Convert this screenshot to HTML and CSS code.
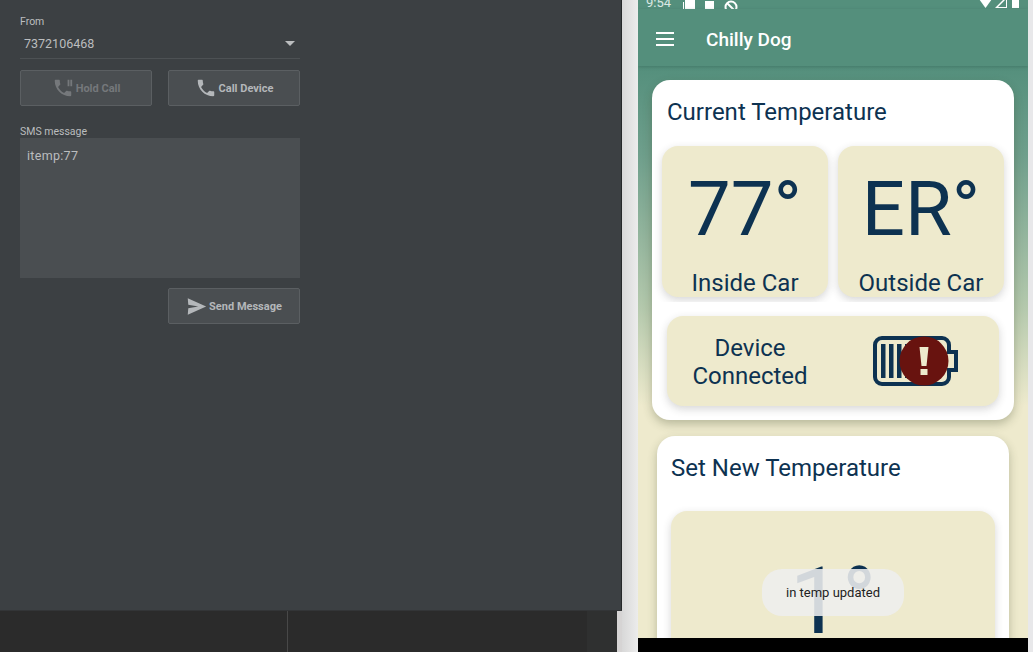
FILE: index.html
```html
<!DOCTYPE html>
<html lang="en">
<head>
  <meta charset="UTF-8">
  <title>Chilly Dog</title>
  <link rel="stylesheet" href="styles.css">
</head>
<body>

  <!-- Emulator extended controls -->
  <div class="tool">
    <section class="panel">
      <label class="field-label from-label">From</label>
      <div class="select-row">
        <span>7372106468</span>
        <span class="caret"></span>
      </div>

      <div class="btn-row">
        <button class="btn disabled">
          <svg viewBox="0 0 24 24" class="btn-icon"><path d="M17 3h2v7h-2zm3 0h2v7h-2zM6.62 10.79c1.44 2.83 3.76 5.14 6.59 6.59l2.2-2.2c.27-.27.67-.36 1.02-.24 1.12.37 2.33.57 3.57.57.55 0 1 .45 1 1V20c0 .55-.45 1-1 1-9.39 0-17-7.61-17-17 0-.55.45-1 1-1h3.5c.55 0 1 .45 1 1 0 1.25.2 2.45.57 3.57.11.35.03.74-.25 1.02l-2.2 2.2z"/></svg>
          Hold Call
        </button>
        <button class="btn">
          <svg viewBox="0 0 24 24" class="btn-icon"><path d="M6.62 10.79c1.44 2.83 3.76 5.14 6.59 6.59l2.2-2.2c.27-.27.67-.36 1.02-.24 1.12.37 2.33.57 3.57.57.55 0 1 .45 1 1V20c0 .55-.45 1-1 1-9.39 0-17-7.61-17-17 0-.55.45-1 1-1h3.5c.55 0 1 .45 1 1 0 1.25.2 2.45.57 3.57.11.35.03.74-.25 1.02l-2.2 2.2z"/></svg>
          Call Device
        </button>
      </div>

      <label class="field-label sms-label">SMS message</label>
      <div class="sms-box">itemp:77</div>

      <div class="send-row">
        <button class="btn">
          <svg viewBox="0 0 24 24" class="btn-icon send-icon"><path d="M2 2.500L23 12 2 21.500l.6-7.500L14 12 2.600 10z"/></svg>
          Send Message
        </button>
      </div>
    </section>
    <div class="tool-bottom">
      <div class="bottom-cell first"></div>
      <div class="bottom-cell middle"></div>
      <div class="bottom-cell last"></div>
      <div class="bottom-edge"></div>
    </div>
  </div>

  <div class="gutter"></div>

  <!-- Phone screen -->
  <div class="phone">
    <div class="status">
      <div class="status-left">
        <span class="clock">9:54</span>
        <svg class="st st-news" viewBox="0 0 12 12"><path d="M2 0h10v9H2zM0 2h1v8h9v1H0z"/></svg>
        <span class="st-sd"></span>
        <svg class="st st-dnd" viewBox="0 0 14 14"><circle cx="7" cy="7" r="5.500" fill="none" stroke="#fff" stroke-width="2"/><path d="M3 3l8 8" stroke="#fff" stroke-width="2"/></svg>
      </div>
      <div class="status-right">
        <svg class="st st-wifi" viewBox="0 0 13 12"><path d="M0 3h13L6.500 12z"/></svg>
        <svg class="st st-signal" viewBox="0 0 12 12"><path d="M12 0v12H0zM11 3L3 11h8z" fill-rule="evenodd"/></svg>
        <span class="st-batt"></span>
      </div>
    </div>

    <header class="appbar">
      <div class="menu"><span></span><span></span><span></span></div>
      <h1>Chilly Dog</h1>
    </header>

    <main class="content">
      <section class="card current">
        <h2>Current Temperature</h2>
        <div class="temps">
          <div class="tile temp">
            <div class="big">77°</div>
            <div class="caption">Inside Car</div>
          </div>
          <div class="tile temp">
            <div class="big">ER°</div>
            <div class="caption">Outside Car</div>
          </div>
        </div>
        <div class="tile device">
          <div class="device-text">Device<br>Connected</div>
          <div class="battery">
            <svg viewBox="0 0 86 50" width="86" height="50">
              <path d="M10 2h60a7 7 0 0 1 7 7v7h7v18h-7v7a7 7 0 0 1-7 7H10a7 7 0 0 1-7-7V9a7 7 0 0 1 7-7z" fill="none" stroke="#0d3251" stroke-width="4"/>
              <path d="M9 8h4.500v34H9zM17 8h4.500v34H17zM25 8h4.500v34H25zM33 8h4.500v34H33zM41 8h4.500v34H41z" fill="#0d3251"/>
              <circle cx="52" cy="25" r="24.500" fill="#68130f"/>
              <path d="M47.500 11h9l-2 19h-5zM48.500 33h7v6h-7z" fill="#eeeacd"/>
            </svg>
          </div>
        </div>
      </section>

      <section class="card setter">
        <h2>Set New Temperature</h2>
        <div class="tile set-tile">
          <div class="big">1°</div>
        </div>
      </section>

      <div class="toast">in temp updated</div>
    </main>

    <div class="navbar"></div>
  </div>

  <div class="rightedge"></div>

</body>
</html>
```

FILE: styles.css
```css
html, body {
  margin: 0;
  height: 652px;
  overflow: hidden;
}
body {
  display: flex;
  font-family: Roboto, "Liberation Sans", sans-serif;
  background-color: #e8e8ea;
}
h1, h2 {
  margin: 0;
  font-weight: 400;
}

/* left tool window */
.tool {
  width: 622px;
  flex: none;
  display: flex;
  flex-direction: column;
}
.panel {
  height: 610px;
  box-sizing: border-box;
  padding: 0 20px;
  background-color: #3c4043;
  border-right: 1px solid #26282a;
  color: #bbbdbf;
}
.panel > * {
  width: 280px;
}
.field-label {
  display: block;
  font-size: 10.500px;
  line-height: 12px;
}
.from-label {
  padding-top: 16px;
}
.select-row {
  display: flex;
  justify-content: space-between;
  align-items: center;
  box-sizing: border-box;
  height: 31px;
  padding: 1px 4px 0;
  border-bottom: 1px solid #4d5154;
  font-size: 12.500px;
}
.caret {
  width: 0;
  height: 0;
  margin-right: 1px;
  border-left: 5.500px solid transparent;
  border-right: 5.500px solid transparent;
  border-top: 5.500px solid #bbbdbf;
}
.btn-row {
  display: flex;
  justify-content: space-between;
  margin-top: 11px;
}
.btn {
  display: flex;
  align-items: center;
  justify-content: center;
  gap: 2px;
  width: 132px;
  height: 36px;
  padding: 0;
  background-color: #4a4e51;
  border: 1px solid #5b5f62;
  border-radius: 2px;
  color: #b4b7ba;
  font-family: Roboto, sans-serif;
  font-size: 11px;
  font-weight: 700;
}
.btn.disabled {
  color: #75787b;
}
.btn-icon {
  width: 22px;
  height: 22px;
  fill: #b4b7ba;
}
.disabled .btn-icon {
  fill: #75787b;
}
.send-icon {
  width: 21px;
  height: 21px;
}
.sms-label {
  margin-top: 20px;
}
.sms-box {
  box-sizing: border-box;
  height: 140px;
  padding: 10px 7px;
  background-color: #4a4e51;
  font-size: 12.500px;
  letter-spacing: 0.3px;
  line-height: 15px;
}
.send-row {
  display: flex;
  justify-content: flex-end;
  margin-top: 10px;
}
.tool-bottom {
  flex: 1;
  display: flex;
  border-top: 1px solid #333537;
  background-color: #2b2b2b;
}
.bottom-cell.first {
  width: 287px;
  border-right: 1px solid #484848;
}
.bottom-cell.middle {
  width: 299px;
}
.bottom-cell.last {
  width: 30px;
  background-color: #2f3030;
}
.bottom-edge {
  flex: 1;
  background-color: #d6d4d4;
}

.gutter {
  width: 16px;
  flex: none;
  background: linear-gradient(to right, #d8d8d8, #ececec);
}
.rightedge {
  flex: 1;
  background-color: #e8e8ea;
}

/* phone */
.phone {
  position: relative;
  width: 390px;
  flex: none;
  display: flex;
  flex-direction: column;
  overflow: hidden;
  background-color: #eeeacd;
  color: #0d3251;
}
.status {
  flex: none;
  height: 9px;
  display: flex;
  justify-content: space-between;
  align-items: flex-end;
  overflow: hidden;
  background-color: #548f7c;
  color: #fff;
}
.status-left, .status-right {
  display: flex;
  align-items: flex-end;
  height: 9px;
}
.status-left {
  padding-left: 8px;
}
.status-right {
  padding-right: 9px;
}
.clock {
  width: 37px;
  flex: none;
  height: 9px;
  font-size: 13px;
  line-height: 5px;
  color: #dce9e4;
}
.st {
  flex: none;
  fill: #fff;
}
.st-news {
  width: 12px;
  height: 12px;
  margin-bottom: -3px;
}
.st-sd {
  width: 9px;
  height: 8px;
  margin-left: 10px;
  background-color: #fff;
}
.st-dnd {
  width: 14px;
  height: 14px;
  margin-left: 10px;
  margin-bottom: -5px;
}
.st-wifi {
  width: 13px;
  height: 12px;
  margin-bottom: 1px;
}
.st-signal {
  width: 12px;
  height: 12px;
  margin-left: 3px;
  margin-bottom: 1px;
}
.st-batt {
  width: 7px;
  height: 8px;
  margin-left: 5px;
  margin-bottom: 1px;
  background-color: #fff;
}
.appbar {
  position: relative;
  z-index: 2;
  flex: none;
  height: 57px;
  box-sizing: border-box;
  padding-top: 3px;
  display: flex;
  align-items: center;
  background-color: #548f7c;
  box-shadow: 0 1px 3px rgba(40, 80, 70, 0.35);
  color: #fff;
}
.menu {
  display: flex;
  flex-direction: column;
  gap: 4px;
  width: 18px;
  margin-left: 18px;
}
.menu span {
  height: 2px;
  background-color: #fff;
}
.appbar h1 {
  margin-left: 32px;
  font-size: 19px;
  font-weight: 500;
}
.content {
  position: relative;
  flex: 1;
  min-height: 0;
  overflow: hidden;
  padding-top: 14px;
  background: linear-gradient(to bottom, #548f7c 0, #6f9f8c 90px, #b3c8ac 240px, #eeeacd 340px);
}
.card {
  background-color: #fff;
  border-radius: 18px;
  box-shadow: 0 4px 10px rgba(60, 70, 40, 0.3);
}
.card h2 {
  font-size: 24px;
  line-height: 28px;
}
.current {
  box-sizing: border-box;
  height: 340px;
  margin: 0 14px;
  padding-top: 18px;
}
.current h2 {
  margin-left: 15px;
}
.temps {
  display: flex;
  gap: 10px;
  overflow: hidden;
  margin-top: 10px;
  padding: 10px 10px 5px;
}
.tile {
  background-color: #eeeacd;
  border-radius: 16px;
  box-shadow: 0 3px 8px rgba(50, 50, 50, 0.2);
}
.temp {
  width: 166px;
  height: 151px;
  text-align: center;
}
.big {
  font-size: 76px;
  line-height: 90px;
}
.temp .big {
  padding-top: 18px;
}
.caption {
  margin-top: 15px;
  font-size: 24px;
  line-height: 28px;
}
.device {
  display: flex;
  align-items: center;
  height: 90px;
  margin: 14px 15px 0;
}
.device-text {
  width: 166px;
  padding-top: 2px;
  text-align: center;
  font-size: 24px;
  line-height: 28px;
}
.battery {
  display: flex;
  margin-left: 39px;
}
.setter {
  height: 300px;
  margin: 16px 19px 0;
  padding: 18px 14px 0;
}
.set-tile {
  height: 240px;
  margin-top: 29px;
  text-align: center;
}
.set-tile .big {
  padding-top: 36px;
  font-size: 93px;
  line-height: 110px;
}
.toast {
  position: absolute;
  left: 124px;
  top: 503px;
  width: 142px;
  height: 47px;
  display: flex;
  align-items: center;
  justify-content: center;
  border-radius: 20px;
  background-color: rgba(238, 238, 238, 0.88);
  color: #222;
  font-size: 13px;
}
.navbar {
  flex: none;
  height: 14px;
  background-color: #000;
  position: relative;
  z-index: 3;
}
```
